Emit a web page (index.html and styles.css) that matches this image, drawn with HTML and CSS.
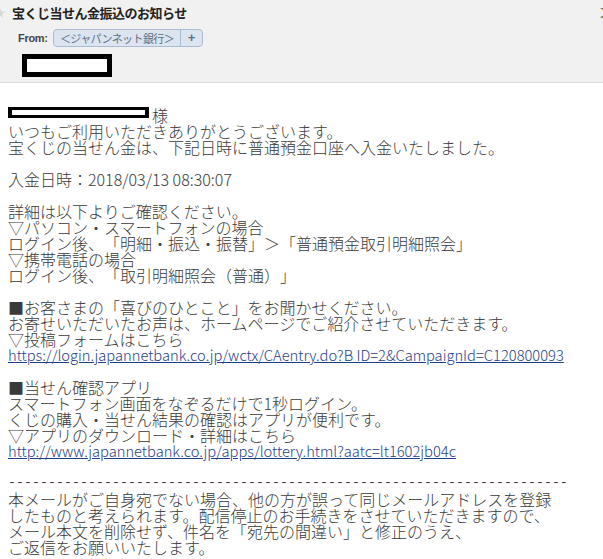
FILE: index.html
```html
<!DOCTYPE html>
<html lang="ja">
<head>
<meta charset="utf-8">
<title>宝くじ当せん金振込のお知らせ</title>
<link rel="stylesheet" href="styles.css">
</head>
<body>
<div class="header">
  <span class="corner">文</span>
  <div class="title-row">
    <svg class="star" width="10" height="10" viewBox="0 0 10 10"><polygon points="5,0 6.2,3.6 10,3.8 7,6.1 8.1,9.8 5,7.6 1.9,9.8 3,6.1 0,3.8 3.8,3.6" fill="#d6d6d6"/></svg>
    <h1 class="title">宝くじ当せん金振込のお知らせ</h1>
  </div>
  <div class="from-row">
    <span class="from-label">From:</span>
    <span class="chip"><span class="chip-name">＜ジャパンネット銀行＞</span><span class="chip-add">+</span></span>
  </div>
  <div class="redact-head"></div>
</div>
<div class="mail">
  <p><span class="redact-name"></span>様<br>
  いつもご利用いただきありがとうございます。<br>
  宝くじの当せん金は、下記日時に普通預金口座へ入金いたしました。</p>
  <p>入金日時：2018/03/13 08:30:07</p>
  <p>詳細は以下よりご確認ください。<br>
  ▽パソコン・スマートフォンの場合<br>
  ログイン後、「明細・振込・振替」＞「普通預金取引明細照会」<br>
  ▽携帯電話の場合<br>
  ログイン後、「取引明細照会（普通）」</p>
  <p>■お客さまの「喜びのひとこと」をお聞かせください。<br>
  お寄せいただいたお声は、ホームページでご紹介させていただきます。<br>
  ▽投稿フォームはこちら<br>
  <a class="link" href="#">https://login.japannetbank.co.jp/wctx/CAentry.do?B ID=2&amp;CampaignId=C120800093</a></p>
  <p>■当せん確認アプリ<br>
  スマートフォン画面をなぞるだけで1秒ログイン。<br>
  くじの購入・当せん結果の確認はアプリが便利です。<br>
  ▽アプリのダウンロード・詳細はこちら<br>
  <a class="link" href="#">http://www.japannetbank.co.jp/apps/lottery.html?aatc=lt1602jb04c</a></p>
  <p><span class="dashes">----------------------------------------------------------------------</span><br>
  本メールがご自身宛でない場合、他の方が誤って同じメールアドレスを登録<br>
  したものと考えられます。配信停止のお手続きをさせていただきますので、<br>
  メール本文を削除せず、件名を「宛先の間違い」と修正のうえ、<br>
  ご返信をお願いいたします。</p>
</div>
</body>
</html>
```

FILE: styles.css
```css
html, body {
  margin: 0;
  padding: 0;
  background: #ffffff;
  overflow: hidden;
}

body {
  font-family: "Noto Sans CJK JP", "Noto Sans", sans-serif;
  color: #333333;
}

.header {
  position: relative;
  background: #f1f1f1;
  border-bottom: 1px solid #dcdcdc;
  height: 83px;
  box-sizing: border-box;
  padding-top: 4px;
  overflow: hidden;
}

.corner {
  position: absolute;
  right: -9px;
  top: 4px;
  font-size: 12px;
  line-height: 16px;
  color: #555;
}

.title-row {
  display: flex;
  align-items: center;
  height: 17px;
}

.star {
  margin-left: -5px;
  margin-right: 7px;
}

.title {
  margin: 0;
  font-size: 13px;
  line-height: 17px;
  font-weight: bold;
  color: #222;
  letter-spacing: -0.5px;
}

.from-row {
  display: flex;
  align-items: center;
  margin-top: 8px;
  height: 18px;
}

.from-label {
  margin-left: 18px;
  width: 35px;
  font-family: "Liberation Sans", sans-serif;
  font-size: 11px;
  font-weight: bold;
  color: #444;
  letter-spacing: -0.3px;
}

.chip {
  display: flex;
  height: 18px;
  box-sizing: border-box;
  border: 1px solid #a9bcd3;
  border-radius: 4px;
  background: #dbe4ef;
  color: #5d6f88;
  font-size: 11px;
  line-height: 16px;
  text-spacing-trim: space-all;
}

.chip-name {
  width: 126px;
  text-align: center;
  letter-spacing: -0.6px;
  border-right: 1px solid #a9bcd3;
}

.chip-add {
  width: 21px;
  text-align: center;
  font-weight: bold;
  font-family: "Liberation Sans", sans-serif;
  font-size: 13px;
}

.redact-head {
  margin-top: 7px;
  margin-left: 22px;
  width: 90px;
  height: 23px;
  box-sizing: border-box;
  border: 5px solid #000;
  background: #fff;
}

.mail {
  padding: 24px 8px 0 8px;
  font-size: 16px;
  line-height: 16px;
  font-weight: 300;
  color: #3a3a3a;
  white-space: nowrap;
  text-spacing-trim: space-all;
}

.mail p {
  margin: 0 0 16px 0;
}

.redact-name {
  display: inline-block;
  vertical-align: top;
  width: 141px;
  height: 11px;
  box-sizing: border-box;
  border-style: solid;
  border-color: #000;
  border-width: 3px 4px;
  background: #fff;
  margin-right: 3px;
}

.link {
  display: inline-block;
  vertical-align: top;
  height: 16px;
  line-height: 16px;
  color: #1f3e8c;
  text-decoration: underline;
  font-size: 14.7px;
}

.dashes {
  display: inline-block;
  vertical-align: top;
  height: 16px;
  line-height: 16px;
  font-family: "Liberation Mono", monospace;
  font-size: 13.33px;
}
```
